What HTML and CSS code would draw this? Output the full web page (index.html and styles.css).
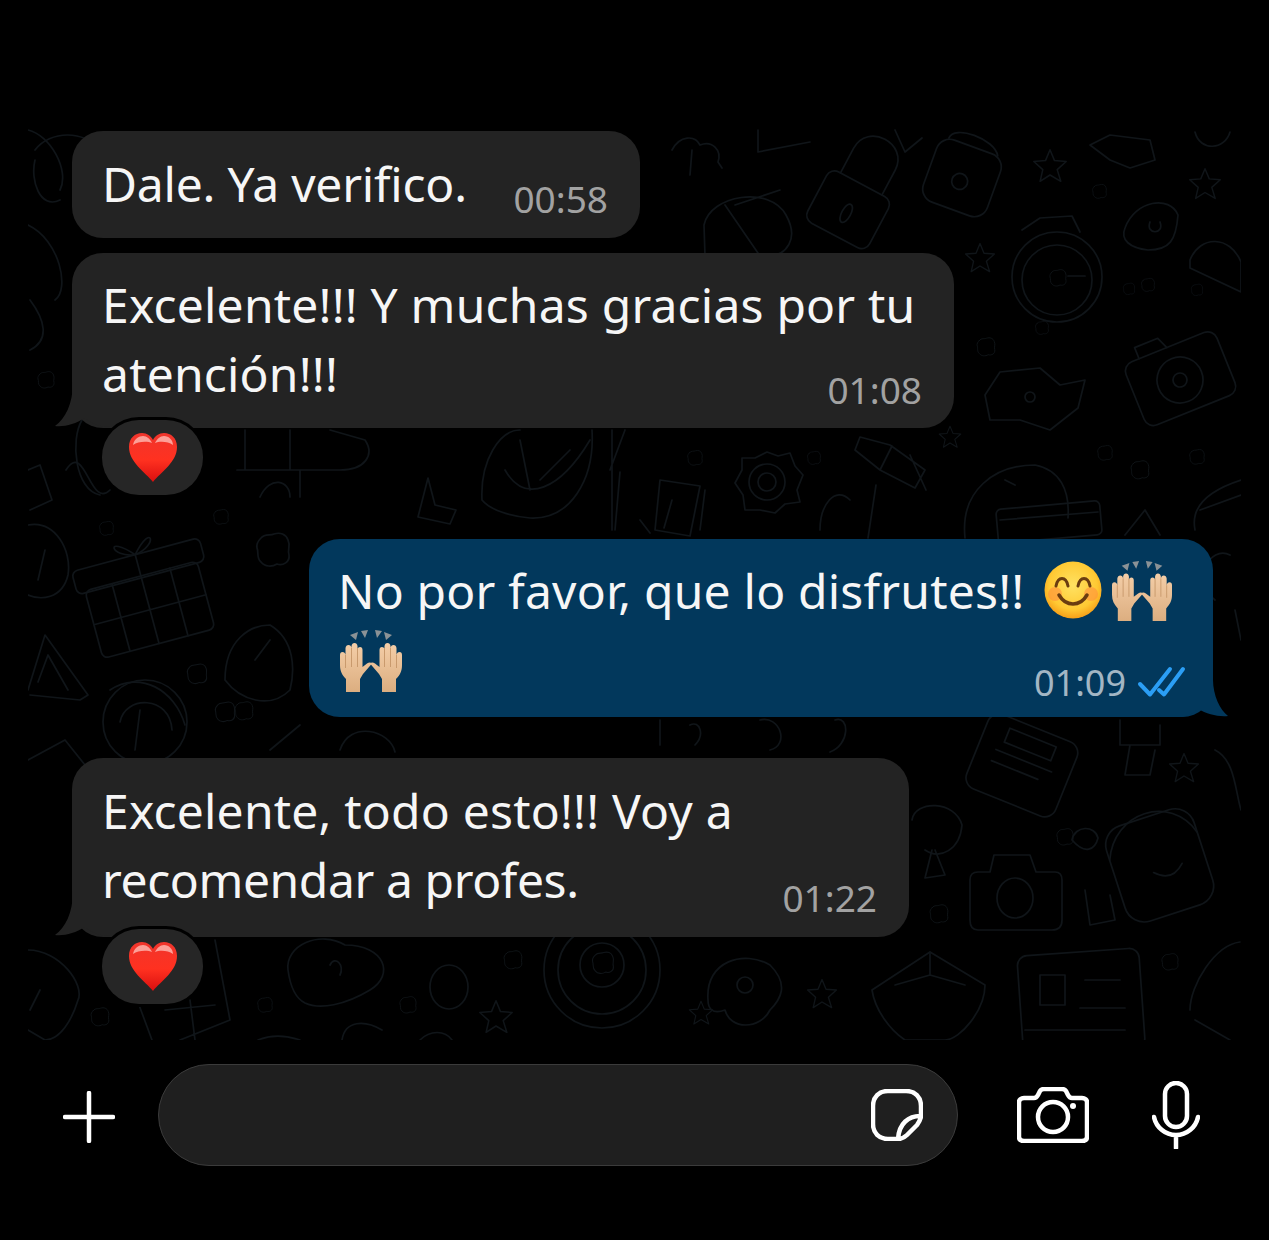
FILE: index.html
```html
<!DOCTYPE html>
<html lang="es">
<head>
    <meta charset="UTF-8">
    <title>Chat</title>
    <link rel="stylesheet" href="styles.css">
</head>
<body>
<svg width="0" height="0" class="defs">
    <defs>
        <symbol id="heart" viewBox="0 0 52 52">
            <path d="M26 50 C18 40 2 30 2 15 C2 6 8 1 15 1 C20 1 24 4 26 8 C28 4 32 1 37 1 C44 1 50 6 50 15 C50 30 34 40 26 50 Z" fill="url(#heartFill)"/>
            <path d="M6 13 C7 7 12 4 16 4 C20 4 23 7 25 11 C21 9 11 9 6 13 Z M28 11 C30 7 33 4 37 4 C42 4 46 8 46 13 C41 9 32 9 28 11 Z" fill="#ffc4bd" opacity=".75"/>
        </symbol>
        <linearGradient id="heartFill" x1="0" y1="0" x2="0" y2="1">
            <stop offset="0" stop-color="#f0352c"/>
            <stop offset=".55" stop-color="#ff3120"/>
            <stop offset="1" stop-color="#d90f0f"/>
        </linearGradient>
        <radialGradient id="smileFill" cx=".5" cy=".42" r=".6">
            <stop offset="0" stop-color="#ffe262"/>
            <stop offset=".7" stop-color="#ffc933"/>
            <stop offset="1" stop-color="#f59a15"/>
        </radialGradient>
        <linearGradient id="skin" x1="0" y1="0" x2="0" y2="1">
            <stop offset="0" stop-color="#f4cea8"/>
            <stop offset="1" stop-color="#dcae80"/>
        </linearGradient>
        <symbol id="hands" viewBox="0 0 64 62">
            <path d="M17 10 L11 5 L19 2 Z M26 8 L22 1 L29 0 Z M38 8 L36 0 L43 1 Z M47 10 L45 2 L53 5 Z" fill="#8b9296"/>
            <g id="handLeft">
                <path d="M7 62 V49 C3 45 1 41 1 35 V25 Q1 22 3.500 22 Q6 22 6.500 25 V18 Q7 15 9.500 15 Q12 15 12.500 18 V16 Q13 13 15.500 13 Q18 13 18.500 16 V19 Q19 17 21 17 Q23.500 17 23.500 20 V37 L28 33.500 Q31 31.500 33 33.500 L24 44 L21 49 V62 Z" fill="url(#skin)"/>
                <path d="M6.500 25 V38 M12.500 18 V37 M18.500 18 V37" stroke="#c99a6d" stroke-width="1" fill="none"/>
            </g>
            <use href="#handLeft" transform="translate(64 0) scale(-1 1)"/>
        </symbol>
        <symbol id="star" viewBox="0 0 40 40">
            <path d="M20 2 L25 14 L38 15 L28 24 L32 37 L20 30 L9 37 L12 24 L2 15 L15 14 Z"/>
        </symbol>
        <symbol id="blob" viewBox="0 0 40 40">
            <path d="M8 8 C12 3 17 6 21 4 C27 2 33 4 35 10 C38 16 34 20 36 25 C37 32 30 36 24 34 C19 37 12 37 8 32 C3 28 6 22 4 18 C3 14 5 11 8 8 Z"/>
        </symbol>
    </defs>
</svg>

<div class="page">
    <svg class="doodles" viewBox="0 0 1269 1240" width="1269" height="1240">
        <clipPath id="wall"><rect x="28" y="128" width="1213" height="912"/></clipPath>
        <g clip-path="url(#wall)">
            <!-- fila de arriba -->
            <path d="M35 150 C50 130 85 130 100 150 M60 200 C40 210 30 180 35 160 M28 225 C60 240 70 290 55 300"/>
            <path d="M672 150 C680 135 695 135 700 145 C712 140 722 150 718 162 L722 168 M692 150 L690 175"/>
            <path d="M758 130 V152 L810 142 M895 130 L905 152 L922 138"/>
            <g transform="rotate(28 857 193)">
                <rect x="822" y="183" width="70" height="58" rx="9"/>
                <path d="M833 183 V155 C833 125 880 125 880 155 V183 M857 206 C851 206 851 226 857 226 C863 226 863 206 857 206"/>
            </g>
            <path d="M704 225 C710 195 770 185 786 215 C800 240 785 255 770 256 M704 225 L705 256 M725 205 L760 256 M735 205 L780 190"/>
            <g transform="rotate(20 962 178)">
                <rect x="928" y="145" width="68" height="66" rx="14"/>
                <circle cx="961" cy="182" r="8"/>
                <path d="M936 145 C936 130 980 130 988 145"/>
            </g>
            <use href="#star" x="1032" y="148" width="36" height="36"/>
            <use href="#star" x="1188" y="167" width="34" height="34"/>
            <use href="#blob" x="1091" y="183" width="17" height="17"/>
            <path d="M1090 145 L1110 135 L1150 140 L1155 160 L1130 168 L1110 160 Z M1195 132 C1200 152 1225 150 1230 132"/>
            <!-- reloj -->
            <circle cx="1057" cy="277" r="45"/>
            <circle cx="1057" cy="280" r="35"/>
            <path d="M1022 230 L1040 218 L1072 216 L1080 232"/>
            <use href="#blob" x="1048" y="268" width="20" height="20"/>
            <path d="M1068 276 L1085 276"/>
            <use href="#blob" x="1034" y="320" width="16" height="16"/>
            <use href="#blob" x="1122" y="282" width="14" height="14"/>
            <use href="#blob" x="1140" y="276" width="16" height="18"/>
            <use href="#blob" x="1190" y="283" width="14" height="14"/>
            <use href="#star" x="964" y="242" width="32" height="32"/>
            <path d="M1125 228 C1135 200 1170 195 1178 215 C1176 240 1170 250 1148 250 C1130 248 1120 240 1125 228 Z M1150 222 C1145 235 1165 235 1160 222"/>
            <path d="M1190 260 C1200 235 1230 235 1241 262 L1241 292 L1190 268 Z"/>
            <g transform="rotate(-22 1180 380)">
                <rect x="1132" y="345" width="98" height="68" rx="10"/>
                <circle cx="1180" cy="380" r="23"/>
                <circle cx="1180" cy="380" r="7"/>
                <path d="M1150 345 V333 H1175 L1180 345"/>
            </g>
            <path d="M985 395 L1000 372 L1040 368 L1060 385 L1085 380 L1078 408 L1050 430 L1020 420 L990 420 Z"/>
            <circle cx="1030" cy="397" r="5"/>
            <use href="#blob" x="975" y="335" width="22" height="24"/>
            <use href="#star" x="938" y="425" width="24" height="24"/>
            <!-- columna izquierda -->
            <path d="M28 130 C50 135 70 170 60 190 M30 300 C45 320 50 340 30 350"/>
            <use href="#blob" x="36" y="370" width="20" height="20"/>
            <path d="M28 470 L40 465 L52 500 L30 510 M66 470 C85 440 90 510 110 490"/>
            <!-- camion -->
            <path d="M237 470 H340 C365 470 375 455 365 440 L330 430 M245 430 V470 M290 430 V470 M300 470 V497 M260 497 C270 475 290 480 290 497"/>
            <path d="M82 420 C70 440 75 490 100 495"/>
            <path d="M428 478 L435 505 L456 510 L450 524 L418 517 Z"/>
            <!-- gorro -->
            <path d="M482 500 C480 460 500 430 520 430 M592 430 C595 480 570 520 530 518 C510 516 490 510 482 500 M505 470 C525 505 560 490 590 440 M520 440 L530 490 M540 480 L570 450"/>
            <path d="M612 430 V530 M625 430 L610 470"/>
            <!-- regalo -->
            <g transform="rotate(-15 149 610)">
                <rect x="92" y="575" width="116" height="70" rx="6"/>
                <rect x="84" y="553" width="132" height="24" rx="6"/>
                <path d="M150 553 V645 M120 575 V645 M180 575 V645 M92 610 H208"/>
                <path d="M150 553 C125 525 125 550 150 553 C175 525 175 550 150 553"/>
            </g>
            <path d="M28 525 C55 520 72 550 68 575 C62 600 40 600 28 595 M45 550 L38 580"/>
            <use href="#blob" x="98" y="520" width="17" height="17"/>
            <use href="#blob" x="212" y="506" width="18" height="22"/>
            <use href="#blob" x="251" y="530" width="44" height="40"/>
            <path d="M28 690 L45 635 L88 695 L80 700 L30 695 M38 682 L48 655 L68 690"/>
            <path d="M225 680 C225 640 250 625 270 625 C295 640 295 670 290 690 C270 710 240 700 225 680 Z M255 660 L270 640"/>
            <circle cx="145" cy="722" r="42"/>
            <path d="M120 722 C125 695 170 695 172 730 M140 710 L135 750 M110 690 C140 670 175 690 185 725"/>
            <use href="#blob" x="185" y="662" width="24" height="24"/>
            <use href="#blob" x="213" y="700" width="24" height="24"/>
            <use href="#blob" x="233" y="700" width="22" height="22"/>
            <path d="M28 760 L65 740 L85 765 M300 725 L270 750 M340 750 C350 720 390 730 395 752"/>
            <!-- franja central -->
            <path d="M660 480 L700 486 L690 536 L655 530 Z M672 500 L664 528"/>
            <path d="M705 490 L700 530 M620 472 L615 530 M640 520 L650 533"/>
            <use href="#blob" x="686" y="448" width="18" height="20"/>
            <use href="#blob" x="806" y="448" width="16" height="20"/>
            <circle cx="767" cy="482" r="18"/>
            <circle cx="767" cy="482" r="9"/>
            <path d="M767 452 L778 456 L790 453 L795 466 L803 475 L797 490 L800 502 L785 504 L775 513 L760 510 L745 510 L743 495 L735 483 L742 470 L742 458 L755 458 Z"/>
            <path d="M860 437 L890 445 L925 470 L915 488 L880 470 L855 450 Z M892 446 L880 470 M910 455 L926 490"/>
            <path d="M820 530 C820 505 835 485 850 500 M876 485 L868 538"/>
            <path d="M965 538 C960 490 995 465 1035 465 C1060 470 1070 490 1068 518"/>
            <rect x="997" y="505" width="104" height="34" rx="5" transform="rotate(-5 1049 522)"/>
            <path d="M1000 520 L1098 512 M1005 480 L1015 485"/>
            <use href="#blob" x="1096" y="444" width="18" height="18"/>
            <use href="#blob" x="1129" y="458" width="22" height="24"/>
            <use href="#blob" x="1187" y="448" width="20" height="18"/>
            <path d="M1195 530 C1190 505 1210 490 1241 480 M1200 510 L1241 495 M1125 535 L1145 510 L1160 535"/>
            <path d="M1230 555 C1210 545 1190 580 1215 600 M1235 610 L1241 640"/>
            <!-- abajo centro derecha -->
            <path d="M660 720 V745 M690 725 C700 720 705 735 695 745 M760 720 C780 715 790 745 770 750 M835 720 C850 715 850 745 830 752"/>
            <path d="M1120 720 V745 L1160 745 V725 M1130 745 L1125 775 L1150 775 L1155 750"/>
            <g transform="rotate(22 1020 770)">
                <rect x="972" y="725" width="96" height="80" rx="12"/>
                <path d="M990 760 H1050 M990 772 H1040 M995 735 H1045 V750 H995 Z"/>
            </g>
            <use href="#star" x="1168" y="750" width="32" height="36"/>
            <path d="M1215 750 C1235 760 1235 790 1241 810"/>
            <path d="M912 820 C915 800 955 800 962 825 C960 850 940 860 925 850 M932 850 L925 878 L945 875 L935 850"/>
            <use href="#blob" x="928" y="902" width="22" height="24"/>
            <path d="M978 872 H990 L994 855 H1030 L1036 872 H1055 Q1062 872 1062 880 V920 Q1062 930 1052 930 H978 Q970 930 970 920 V880 Q970 872 978 872 Z"/>
            <ellipse cx="1015" cy="898" rx="18" ry="20"/>
            <path d="M1072 840 C1075 825 1095 825 1098 838 C1095 850 1085 855 1072 840"/>
            <use href="#blob" x="1055" y="825" width="20" height="24"/>
            <g transform="rotate(-18 1160 860)">
                <rect x="1112" y="815" width="92" height="100" rx="20"/>
                <path d="M1112 845 C1130 800 1190 800 1204 845 M1150 870 C1160 880 1170 880 1180 870"/>
            </g>
            <path d="M1085 890 L1090 925 L1115 920 L1110 895"/>
            <!-- abajo izquierda -->
            <path d="M28 950 C60 950 85 985 78 1000 C72 1020 60 1040 45 1040 L28 1030 M40 990 L30 1010"/>
            <path d="M139 1005 L152 1040 M215 940 L230 1020 L180 1040 M165 1010 L215 1005 M190 1000 L195 1040"/>
            <use href="#blob" x="89" y="1003" width="22" height="28"/>
            <use href="#blob" x="256" y="995" width="18" height="20"/>
            <path d="M288 970 C285 945 320 930 345 945 C385 945 395 975 370 990 C345 1005 320 1010 305 1003 C295 998 290 985 288 970 Z M330 965 C335 955 345 965 340 975"/>
            <ellipse cx="449" cy="987" rx="19" ry="22"/>
            <use href="#blob" x="398" y="993" width="20" height="24"/>
            <use href="#blob" x="502" y="948" width="22" height="24"/>
            <use href="#star" x="478" y="994" width="36" height="46"/>
            <path d="M342 1040 C345 1020 365 1020 382 1030 M420 1040 C430 1030 445 1030 452 1040 M258 1040 C270 1035 285 1035 300 1040"/>
            <circle cx="602" cy="970" r="58"/>
            <circle cx="602" cy="970" r="44"/>
            <circle cx="602" cy="965" r="22"/>
            <use href="#blob" x="590" y="950" width="26" height="26"/>
            <path d="M708 1000 C705 960 745 950 770 965 C790 985 780 1000 770 1010 C760 1030 730 1030 725 1010 C712 1015 708 1008 708 1000 Z"/>
            <circle cx="745" cy="985" r="8"/>
            <use href="#star" x="806" y="975" width="32" height="38"/>
            <use href="#star" x="688" y="998" width="26" height="30"/>
            <path d="M872 990 L930 952 L985 985 C985 1010 960 1040 945 1040 H905 C890 1030 875 1010 872 990 Z"/>
            <path d="M930 952 V975 M895 985 L930 975 L965 985"/>
            <rect x="1020" y="952" width="122" height="100" rx="10" transform="rotate(-4 1080 1000)"/>
            <path d="M1040 975 H1065 V1005 H1040 Z M1085 980 H1120 M1080 1008 H1125 M1025 1030 H1125"/>
            <use href="#blob" x="1160" y="950" width="20" height="24"/>
            <path d="M1190 1010 C1190 985 1215 945 1240 942 M1195 1020 L1230 1040"/>
        </g>
    </svg>

    <div class="chat">
        <div class="bubble short">
            <span class="text">Dale. Ya verifico.</span>
            <span class="time">00:58</span>
        </div>

        <div class="bubble in wide">
            <svg class="tail" viewBox="0 0 56 46"><path d="M18 0 C18 22 10 37 0 44 C10 45 20 42 30 36 C37 42 45 45 56 45 V0 Z"/></svg>
            <div class="text">Excelente!!! Y muchas gracias por tu<br>atención!!!</div>
            <div class="meta"><span class="time">01:08</span></div>
        </div>
        <div class="reaction"><svg class="heart" viewBox="0 0 52 52"><use href="#heart"/></svg></div>

        <div class="bubble out">
            <svg class="tail" viewBox="0 0 48 37"><path d="M33 0 C33 15 40 30 48 36 C38 37 27 34 18 29 C13 33 8 37 0 37 V0 Z"/></svg>
            <div class="text">No por favor, que lo disfrutes!!
                <svg class="emoji smile" viewBox="0 0 58 58">
                    <circle cx="29" cy="29" r="28.500" fill="url(#smileFill)"/>
                    <circle cx="11" cy="33" r="7" fill="#ff8b3e" opacity=".55"/>
                    <circle cx="47" cy="33" r="7" fill="#ff8b3e" opacity=".55"/>
                    <path d="M12 25 C14 15 22 15 24 25 M34 25 C36 15 44 15 46 25" stroke="#6b3d10" stroke-width="3" fill="none" stroke-linecap="round"/>
                    <path d="M15 34 C22 46 36 46 43 34" stroke="#6b3d10" stroke-width="3.500" fill="none" stroke-linecap="round"/>
                </svg>
                <svg class="emoji hands" viewBox="0 0 64 62"><use href="#hands"/></svg>
            </div>
            <div class="last">
                <svg class="emoji hands" viewBox="0 0 64 62"><use href="#hands"/></svg>
            </div>
            <div class="meta">
                <span class="time">01:09</span>
                <svg class="ticks" viewBox="0 0 45 29"><path d="M1 17 L11 27.500 L31 2 M20 23 L25 27.500 L44 2"/></svg>
            </div>
        </div>

        <div class="bubble in mid">
            <svg class="tail" viewBox="0 0 56 46"><path d="M18 0 C18 22 10 37 0 44 C10 45 20 42 30 36 C37 42 45 45 56 45 V0 Z"/></svg>
            <div class="text">Excelente, todo esto!!! Voy a<br><span class="tight">recomendar a profes.</span></div>
            <div class="meta"><span class="time">01:22</span></div>
        </div>
        <div class="reaction"><svg class="heart" viewBox="0 0 52 52"><use href="#heart"/></svg></div>
    </div>

    <div class="composer">
        <svg class="icon plus" viewBox="0 0 52 52"><path d="M26 2 V50 M2 26 H50"/></svg>
        <div class="input">
            <svg class="icon sticker" viewBox="0 0 52 52"><path d="M17 2 H35 C44 2 50 8 50 17 V27 C50 30 48 33 46 36 L36 46 C33 49 30 50 27 50 H17 C8 50 2 44 2 35 V17 C2 8 8 2 17 2 Z M49 27 C38 27 28 34 27 50"/></svg>
        </div>
        <svg class="icon camera" viewBox="0 0 72 56">
            <path d="M7 11 H17 C19 11 20 10 21 8 L23 4 C24 2.500 25 2 27 2 H45 C47 2 48 2.500 49 4 L51 8 C52 10 53 11 55 11 H65 C68 11 70 13 70 15 V50 C70 53 68 54 65 54 H7 C4 54 2 53 2 50 V15 C2 13 4 11 7 11 Z"/>
            <circle cx="36" cy="30" r="15"/>
            <circle class="dot" cx="56" cy="19" r="3"/>
        </svg>
        <svg class="icon mic" viewBox="0 0 48 68">
            <rect x="13" y="2" width="22" height="44" rx="11"/>
            <path d="M2 36 C4 46 13 54 24 54 C35 54 44 46 46 36 M24 54 V67"/>
        </svg>
    </div>
</div>
</body>
</html>
```

FILE: styles.css
```css
*{
    margin:0;
    padding:0;
    box-sizing:border-box;
}
body{
    background-color:#000;
    font-family:"Noto Sans","Liberation Sans",sans-serif;
    color:#f6f6f6;
}
.defs{
    display:block;
    height:0;
}
.page{
    position:relative;
    width:1269px;
    height:1240px;
    overflow:hidden;
}
.doodles{
    position:absolute;
    left:0;
    top:0;
    fill:none;
    stroke:#101519;
    stroke-width:1.700;
    stroke-linecap:round;
    stroke-linejoin:round;
}
.chat{
    position:relative;
    height:1064px;
    padding:131px 0 0 72px;
}
.bubble{
    position:relative;
    padding:0 32px 0 30px;
    background-color:#232323;
    border-radius:31px;
    font-size:48px;
    line-height:69px;
}
.text{
    position:relative;
    white-space:nowrap;
    letter-spacing:.2px;
}
.tight{
    letter-spacing:-.4px;
}
.time{
    color:#a2a2a2;
    font-size:37px;
    line-height:44px;
}
.meta{
    position:relative;
    display:flex;
    justify-content:flex-end;
    align-items:center;
    gap:13px;
}
.short{
    display:flex;
    justify-content:space-between;
    align-items:flex-end;
    width:568px;
    height:107px;
    margin-bottom:15px;
    padding-top:18px;
    padding-bottom:17px;
}
.short .text{
    align-self:flex-start;
    letter-spacing:-.2px;
}
.wide{
    width:882px;
    height:175px;
    padding-top:17px;
}
.wide .meta{
    margin-top:-40px;
}
.mid{
    width:837px;
    height:179px;
    padding-top:18px;
}
.mid .meta{
    margin-top:-38px;
}
.out{
    width:904px;
    height:178px;
    margin:44px 0 41px 237px;
    padding:17px 29px 0 29px;
    background-color:#02385c;
}
.out .time{
    color:#a3b6c4;
    font-size:36px;
}
.out .meta{
    height:44px;
    margin-top:-31px;
}
.last{
    display:flex;
    height:62px;
    margin-top:5px;
}
.emoji{
    display:inline-block;
    vertical-align:middle;
}
.smile{
    width:58px;
    height:58px;
    margin:-12px 0 0 7px;
}
.hands{
    width:62px;
    height:60px;
    margin:-10px 0 0 -4px;
}
.last .hands{
    width:64px;
    height:62px;
    margin:0 0 0 1px;
}
.ticks{
    width:45px;
    height:29px;
    margin-top:-4px;
    overflow:visible;
    fill:none;
    stroke:#2b9ef5;
    stroke-width:4;
    stroke-linecap:round;
    stroke-linejoin:round;
}
.tail{
    position:absolute;
    left:-17px;
    bottom:0;
    width:56px;
    height:46px;
    fill:#232323;
}
.out .tail{
    left:auto;
    right:-15px;
    width:48px;
    height:37px;
    fill:#02385c;
}
.reaction{
    position:relative;
    display:flex;
    align-items:center;
    justify-content:center;
    width:101px;
    height:75px;
    margin:-8px 0 0 30px;
    background-color:#262626;
    border-radius:37px;
    box-shadow:0 0 0 3px #000;
}
.heart{
    width:52px;
    height:52px;
}
.composer{
    display:flex;
    align-items:center;
    height:102px;
    padding-left:63px;
}
.icon{
    flex:none;
    fill:none;
    stroke:#fff;
    stroke-width:4.500;
    stroke-linecap:round;
    stroke-linejoin:round;
}
.plus{
    width:52px;
    height:52px;
    margin:4px 43px 0 0;
}
.input{
    display:flex;
    align-items:center;
    justify-content:flex-end;
    width:800px;
    height:102px;
    padding-right:34px;
    background-color:#1f1f1f;
    border:1px solid #3b3b3b;
    border-radius:51px;
}
.sticker{
    width:52px;
    height:52px;
}
.camera{
    width:72px;
    height:56px;
    margin:0 63px 0 59px;
}
.camera .dot{
    fill:#fff;
    stroke:none;
}
.mic{
    width:48px;
    height:68px;
}
```
